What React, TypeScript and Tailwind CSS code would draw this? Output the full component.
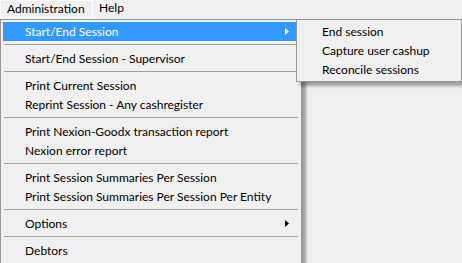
import React from "react";

type Entry = { label: string; sub?: boolean; active?: boolean } | "sep";

const mainItems: Entry[] = [
  { label: "Start/End Session", sub: true, active: true },
  "sep",
  { label: "Start/End Session - Supervisor" },
  "sep",
  { label: "Print Current Session" },
  { label: "Reprint Session - Any cashregister" },
  "sep",
  { label: "Print Nexion-Goodx transaction report" },
  { label: "Nexion error report" },
  "sep",
  { label: "Print Session Summaries Per Session" },
  { label: "Print Session Summaries Per Session Per Entity" },
  "sep",
  { label: "Options", sub: true },
  "sep",
  { label: "Debtors" },
];

const subItems = ["End session", "Capture user cashup", "Reconcile sessions"];

function Arrow({ white }: { white?: boolean }) {
  return (
    <svg width="4" height="7" viewBox="0 0 4 7" className="absolute right-[10px] top-[6px]">
      <path d="M0 0 L4 3.5 L0 7 Z" fill={white ? "#ffffff" : "#000000"} />
    </svg>
  );
}

function MenuRow({ entry }: { entry: Entry }) {
  if (entry === "sep") {
    return (
      <div className="h-[8px] flex items-center px-[1px]">
        <div className="w-full h-[2px] border-t border-[#a0a0a0] border-b-white" />
      </div>
    );
  }
  return (
    <div
      className={
        "relative h-[19px] leading-[19px] pl-[22px] whitespace-nowrap " +
        (entry.active ? "bg-[#3399ff] text-white" : "text-black")
      }
    >
      {entry.label}
      {entry.sub && <Arrow white={entry.active} />}
    </div>
  );
}

export default function App() {
  return (
    <div
      className="relative w-[462px] h-[263px] overflow-hidden bg-[#f0f0f0] text-[12px]"
      style={{ fontFamily: 'Lato, "Noto Sans", sans-serif' }}
    >
      {/* menu bar */}
      <div className="flex h-[19px] items-stretch">
        <div className="w-[93px] h-[18px] border border-white pl-[6px] leading-[16px] text-black">
          Administration
        </div>
        <div className="pl-[6px] leading-[16px] text-black">Help</div>
      </div>

      {/* main dropdown */}
      <div className="absolute left-0 top-[19px] w-[302px] h-[245px] border border-[#979797] bg-[#f0f0f0] py-[2px] pl-[2px] pr-[2px] shadow-[4px_4px_3px_0px_rgba(0,0,0,0.35)]">
        {mainItems.map((e, i) => (
          <MenuRow key={i} entry={e} />
        ))}
      </div>

      {/* submenu */}
      <div className="absolute left-[296px] top-[19px] w-[166px] h-[63px] border border-[#979797] bg-[#f0f0f0] py-[2px] shadow-[4px_4px_3px_0px_rgba(0,0,0,0.35)]">
        {subItems.map((s) => (
          <div key={s} className="h-[19px] leading-[19px] pl-[25px] text-black whitespace-nowrap">
            {s}
          </div>
        ))}
      </div>
    </div>
  );
}
